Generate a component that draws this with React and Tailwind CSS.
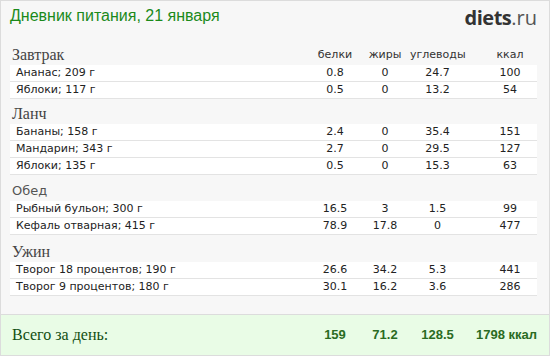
const meals = [
  {
    name: "Завтрак",
    head: "h-[25px]",
    font: "font-['Liberation_Serif',serif] text-[16px] text-[#444]",
    items: [
      ["Ананас; 209 г", "0.8", "0", "24.7", "100"],
      ["Яблоки; 117 г", "0.5", "0", "13.2", "54"],
    ],
  },
  {
    name: "Ланч",
    head: "h-[25px]",
    font: "font-['Liberation_Serif',serif] text-[16px] text-[#444]",
    items: [
      ["Бананы; 158 г", "2.4", "0", "35.4", "151"],
      ["Мандарин; 343 г", "2.7", "0", "29.5", "127"],
      ["Яблоки; 135 г", "0.5", "0", "15.3", "63"],
    ],
  },
  {
    name: "Обед",
    head: "h-[26px]",
    font: "font-['DejaVu_Sans',sans-serif] text-[13px] text-[#555]",
    items: [
      ["Рыбный бульон; 300 г", "16.5", "3", "1.5", "99"],
      ["Кефаль отварная; 415 г", "78.9", "17.8", "0", "477"],
    ],
  },
  {
    name: "Ужин",
    head: "h-[27px]",
    font: "font-['Liberation_Serif',serif] text-[16px] text-[#444]",
    items: [
      ["Творог 18 процентов; 190 г", "26.6", "34.2", "5.3", "441"],
      ["Творог 9 процентов; 180 г", "30.1", "16.2", "3.6", "286"],
    ],
  },
];

function Cols({ values, className }) {
  return (
    <>
      <div className={"w-[50px] text-center " + className}>{values[0]}</div>
      <div className={"w-[50px] text-center " + className}>{values[1]}</div>
      <div className={"w-[55px] text-center " + className}>{values[2]}</div>
      <div className="w-[20px]" />
      <div className={"w-[50px] text-center " + className}>{values[3]}</div>
    </>
  );
}

export default function App() {
  return (
    <div className="w-[550px] h-[356px] border border-[#dcdcdc] bg-[#f7f7f7] flex flex-col font-['DejaVu_Sans',sans-serif]">
      <div className="h-[39px] flex justify-between pl-[9px] pr-[12px]">
        <div className="pt-[5px] leading-[20px] text-[16px] text-[#1b8a1b] font-['Liberation_Sans',sans-serif]">
          Дневник питания, 21 января
        </div>
        <div className="pt-[5px] leading-[24px] text-[20px] text-[#333] font-['Open_Sans',sans-serif]">
          <span className="font-bold tracking-[-0.5px]">diets</span>
          <span className="text-[#555]">.ru</span>
        </div>
      </div>

      <div className="pl-[9px] pr-[12px]">
        {meals.map((meal, i) => (
          <div key={meal.name}>
            <div className={"flex items-end pb-[2px] " + meal.head}>
              <div className={"flex-1 pl-[2px] leading-[16px] " + meal.font}>{meal.name}</div>
              {i === 0 && (
                <div className="flex pb-[1px] text-[11px] leading-[14px] text-[#333]">
                  <Cols values={["белки", "жиры", "углеводы", "ккал"]} />
                  <div className="w-[2px]" />
                </div>
              )}
            </div>
            {meal.items.map((row) => (
              <div
                key={row[0]}
                className="flex h-[17px] items-center bg-white border-b border-[#e3e3e3] text-[11px] text-[#222]"
              >
                <div className="flex-1 pl-[6px]">{row[0]}</div>
                <Cols values={row.slice(1)} />
                <div className="w-[2px]" />
              </div>
            ))}
          </div>
        ))}
      </div>

      <div className="mt-auto h-[41px] border-t border-[#dcdcdc] bg-[#e9fce6] flex items-center pl-[11px] pr-[12px]">
        <div className="flex-1 text-[16px] text-[#124f12] font-['Liberation_Serif',serif]">
          Всего за день:
        </div>
        <div className="flex items-center font-['Liberation_Sans',sans-serif] font-bold text-[13px] text-[#2a6b22]">
          <div className="w-[50px] text-center">159</div>
          <div className="w-[50px] text-center">71.2</div>
          <div className="w-[55px] text-center">128.5</div>
          <div className="w-[72px] text-right">1798 ккал</div>
        </div>
      </div>
    </div>
  );
}
